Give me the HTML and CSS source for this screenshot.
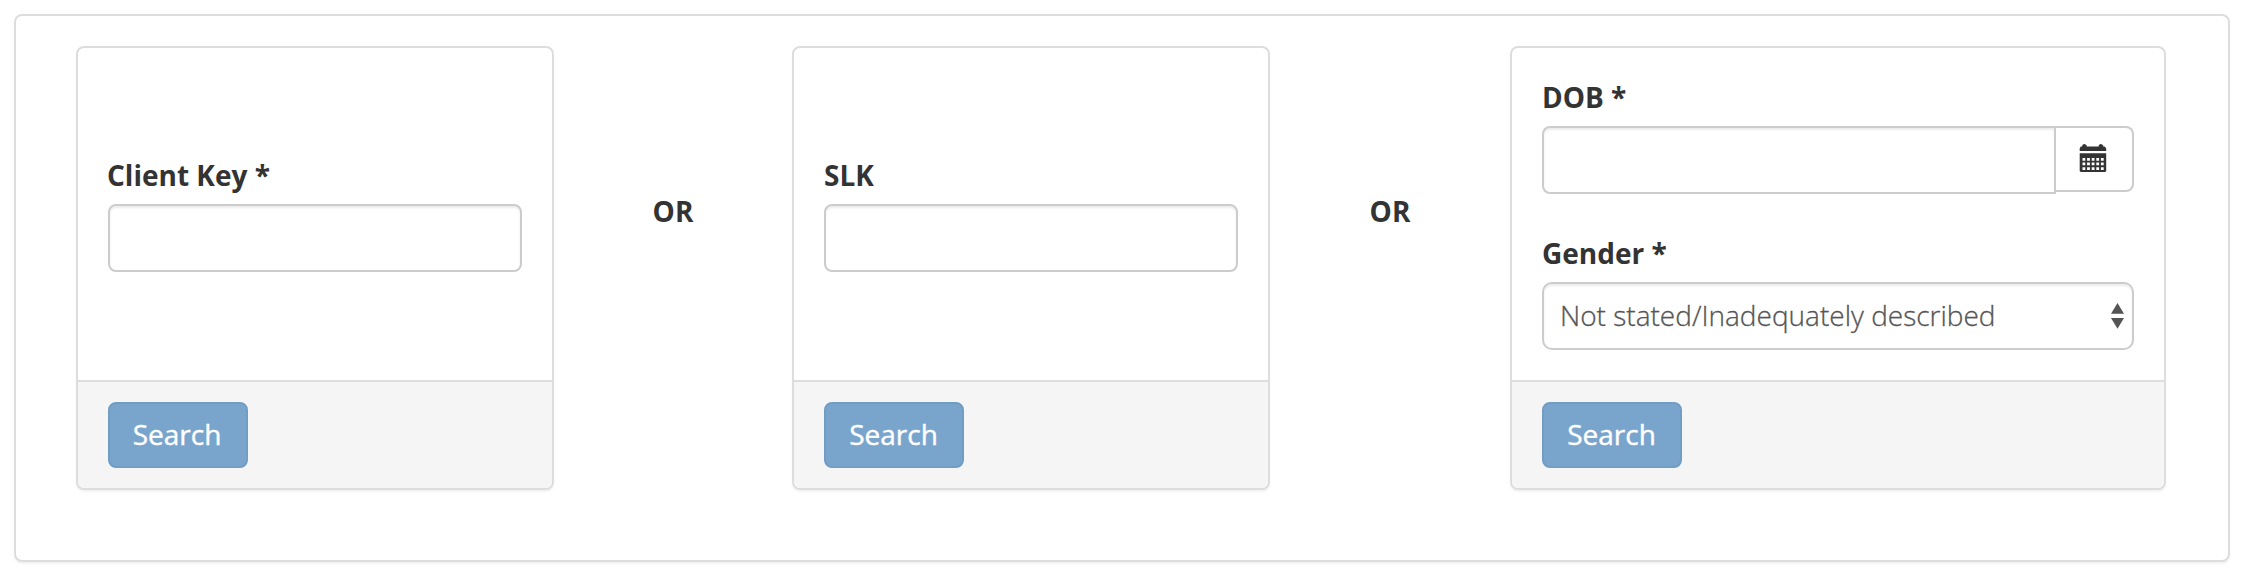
FILE: index.html
```html
<!DOCTYPE html>
<html lang="en">
<head>
<meta charset="utf-8">
<title>Client search</title>
<link rel="stylesheet" href="styles.css">
</head>
<body>
<main class="panel search-panel">
  <form class="panel card">
    <div class="card-body">
      <div class="field">
        <label for="client-key">Client Key *</label>
        <input class="control" id="client-key" type="text">
      </div>
    </div>
    <div class="card-footer"><button class="btn" type="button">Search</button></div>
  </form>
  <div class="separator">OR</div>
  <form class="panel card">
    <div class="card-body">
      <div class="field">
        <label for="slk">SLK</label>
        <input class="control" id="slk" type="text">
      </div>
    </div>
    <div class="card-footer"><button class="btn" type="button">Search</button></div>
  </form>
  <div class="separator separator-wide">OR</div>
  <form class="panel card card-wide">
    <div class="card-body">
      <div class="field">
        <label for="dob">DOB *</label>
        <div class="input-group">
          <input class="control" id="dob" type="text">
          <button class="addon" type="button" aria-label="Choose date">
            <svg width="28" height="28" viewBox="0 0 28 28" fill="#333">
              <path d="M.700 7V4.500L1.700 2.500H3.200V1.500Q3.700 0 5.200 0T7.700 1.500V2.500H19.700V1.500Q20.200 0 21.700 0T24.200 1.500V2.500H25.700L27.200 4.500V7Z"/>
              <path fill-rule="evenodd" d="M.700 9.300H27.200V27L26.200 28H1.700L.700 27ZM3.500 14v2.700h2.800v-2.700zM8.100 14v2.700h2.800v-2.700zM12.700 14v2.700h2.800v-2.700zM17.300 14v2.700h2.800v-2.700zM21.900 14v2.700h2.800v-2.700zM3.500 18.500v2.700h2.800v-2.700zM8.100 18.500v2.700h2.800v-2.700zM12.700 18.500v2.700h2.800v-2.700zM17.300 18.500v2.700h2.800v-2.700zM21.900 18.500v2.700h2.800v-2.700zM3.500 23.200v2.700h2.800v-2.700zM8.100 23.200v2.700h2.800v-2.700zM12.700 23.200v2.700h2.800v-2.700zM17.300 23.200v2.700h2.800v-2.700zM21.900 23.200v2.700h2.800v-2.700z"/>
            </svg>
          </button>
        </div>
      </div>
      <div class="field">
        <label>Gender *</label>
        <div class="control select">
          <span>Not stated/Inadequately described</span>
          <svg width="13" height="26" viewBox="0 0 13 26" fill="#555"><path d="M6.500 0L13 10.800H0ZM0 15H13L6.500 25.800Z"/></svg>
        </div>
      </div>
    </div>
    <div class="card-footer"><button class="btn" type="button">Search</button></div>
  </form>
</main>
</body>
</html>
```
FILE: styles.css
```css
* { box-sizing: border-box; }
body {
  margin: 0;
  padding: 14px 16px 16px 14px;
  background: #fff;
  color: #333;
  font: 28px/40px "Open Sans", "Noto Sans", sans-serif;
}
.panel {
  border: 2px solid #ddd;
  border-radius: 8px;
  background: #fff;
  box-shadow: 0 2px 2px rgba(0, 0, 0, .05);
}
.search-panel {
  display: flex;
  align-items: flex-start;
  height: 548px;
  padding: 30px 60px;
}
.card {
  display: flex;
  flex-direction: column;
  flex: none;
  width: 478px;
  height: 444px;
}
.card-wide { width: 656px; }
.card-body {
  display: flex;
  flex: 1;
  flex-direction: column;
  justify-content: center;
  gap: 40px;
  padding: 0 30px;
}
.field { display: flex; flex-direction: column; gap: 8px; }
label, .separator { font-weight: 700; }
label {
  height: 40px;
  line-height: 38px;
}
.card:first-child label { margin-left: -1px; }
.separator {
  flex: none;
  width: 238px;
  padding-top: 145px;
  text-align: center;
}
.separator-wide { width: 240px; }
.control {
  width: 100%;
  height: 68px;
  padding: 0 16px;
  border: 2px solid #ccc;
  border-radius: 8px;
  background: #fff;
  color: #555;
  font: inherit;
  box-shadow: inset 0 2px 2px rgba(0, 0, 0, .075);
}
.input-group { display: flex; align-items: flex-start; }
.input-group .control {
  flex: 1;
  border-radius: 8px 0 0 8px;
}
.addon {
  display: flex;
  flex: none;
  justify-content: center;
  width: 78px;
  height: 66px;
  padding: 16px 3px 0 0;
  border: 2px solid #ccc;
  border-left: 0;
  border-radius: 0 8px 8px 0;
  background: #fff;
}
.select {
  display: flex;
  align-items: center;
  justify-content: space-between;
  padding-right: 8px;
  border-radius: 10px;
  font-weight: 300;
}
.select span {
  padding-bottom: 2px;
  -webkit-text-stroke: .3px #555;
}
.card-footer {
  height: 108px;
  padding: 20px 30px;
  border-top: 2px solid #ddd;
  border-radius: 0 0 6px 6px;
  background: #f5f5f5;
}
.btn {
  display: block;
  width: 140px;
  height: 66px;
  padding: 0 1px 2px 0;
  border: 2px solid #729dc3;
  border-radius: 8px;
  background: #79a5cd;
  color: #fff;
  font: inherit;
  -webkit-text-stroke: .4px #fff;
}
.card:first-child .btn { padding-right: 2px; }
```
